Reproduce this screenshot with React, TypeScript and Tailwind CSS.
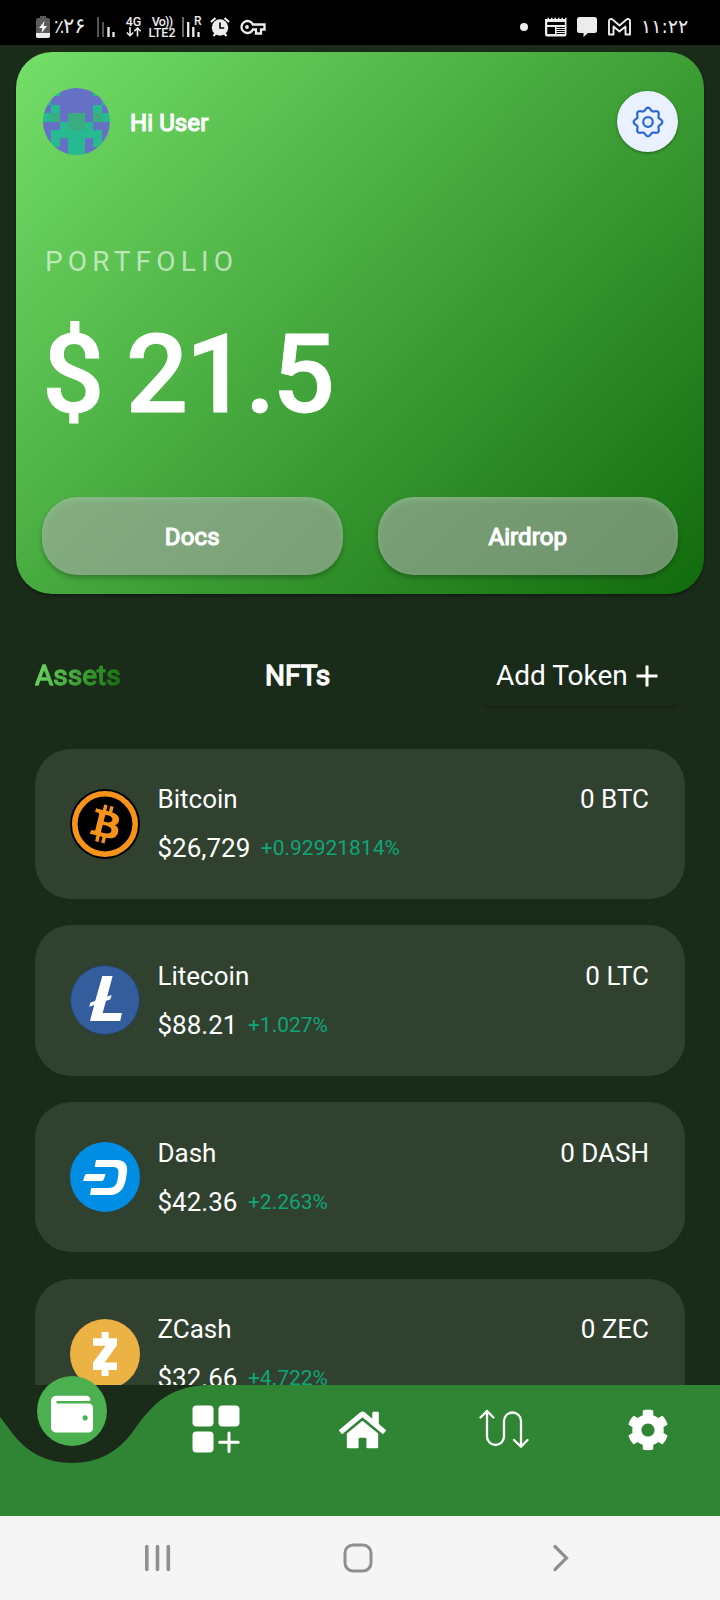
import { useState } from 'react'
import type { ReactNode } from 'react'
import clsx from 'clsx'
import { FaCog, FaHome, FaWallet } from 'react-icons/fa'

interface Asset {
  name: string
  symbol: string
  price: string
  change: string
  icon: ReactNode
}

// P = purple, T = teal, G = green
const avatarRows = [
  'PTPPPPTP',
  'TPPPPPPT',
  'PTPPPPTP',
  'TGPGGPGT',
  'PPTGGTPP',
  'PTTTTTTP',
  'PTPTTPTP',
  'PPPTTPPP',
]

const avatarColors: Record<string, string> = { P: '#6670c4', T: '#27b98f', G: '#3bac80' }

// Eight soft lobes around the centre of a 40x40 box
const gearPoints = Array.from({ length: 128 }, (_, i) => {
  const a = (i / 128) * Math.PI * 2
  const r = 12.9 + 1.4 * Math.cos(8 * a)
  return `${(20 + r * Math.cos(a)).toFixed(2)},${(20 + r * Math.sin(a)).toFixed(2)}`
}).join(' ')

function Avatar() {
  return (
    <svg viewBox="0 0 8 8" className="w-[67px] h-[67px] rounded-full" shapeRendering="crispEdges">
      {avatarRows.map((row, y) =>
        row.split('').map((c, x) => (
          <rect key={`${x}-${y}`} x={x} y={y} width="1" height="1" fill={avatarColors[c]} />
        ))
      )}
    </svg>
  )
}

function BitcoinIcon() {
  return (
    <svg viewBox="0 0 70 70" className="w-[70px] h-[70px]">
      <circle cx="35" cy="35" r="35" fill="#000" />
      <circle cx="35" cy="35" r="30.2" fill="none" stroke="#f7931a" strokeWidth="5.6" />
      <path
        transform="translate(3.8 3.8) scale(1.95)"
        fill="#f7931a"
        d="M23.189 14.02c.314-2.096-1.283-3.223-3.465-3.975l.708-2.84-1.728-.43-.69 2.765c-.454-.114-.92-.22-1.385-.326l.695-2.783L15.596 6l-.708 2.839c-.376-.086-.746-.17-1.104-.26l.002-.009-2.384-.595-.46 1.846s1.283.294 1.256.312c.7.175.826.638.805 1.006l-.806 3.235c.048.012.11.03.18.057l-.183-.045-1.13 4.532c-.086.212-.303.531-.793.41.018.025-1.256-.313-1.256-.313l-.858 1.978 2.25.561c.418.105.828.215 1.231.318l-.715 2.872 1.727.43.708-2.84c.472.127.93.245 1.378.357l-.706 2.828 1.728.43.715-2.866c2.948.558 5.164.333 6.097-2.333.752-2.146-.037-3.385-1.588-4.192 1.13-.26 1.98-1.003 2.207-2.538zm-3.95 5.538c-.533 2.147-4.148.986-5.32.695l.95-3.805c1.172.293 4.929.872 4.37 3.11zm.535-5.569c-.487 1.953-3.495.96-4.47.717l.86-3.45c.975.243 4.118.696 3.61 2.733z"
      />
    </svg>
  )
}

function LitecoinIcon() {
  return (
    <svg viewBox="0 0 70 70" className="w-[70px] h-[70px]">
      <circle cx="35" cy="35" r="34.5" fill="#345d9d" stroke="#23406b" strokeWidth="0.8" />
      <path
        fill="#fff"
        d="M32.3 11h10.3l-5.4 20.6 4.4-1.5-1.1 4.2-4.5 1.6-3.4 12H52l-1.8 8H20l4.2-16-5 1.8 1-4 5.1-1.9z"
      />
    </svg>
  )
}

function DashIcon() {
  return (
    <svg viewBox="0 0 70 70" className="w-[70px] h-[70px]">
      <circle cx="35" cy="35" r="35" fill="#008de4" />
      <path
        fill="#fff"
        d="M26 18h21c8 0 11 5 10 12l-1.3 8C54 47.5 48.5 53 40 53H20l1.2-7H38.3c5.7 0 8.7-3 9.5-9.5l.6-4.5c.6-5-1.4-7-5.400-7H24.7z"
      />
      <path fill="#fff" d="M17.6 32H35.5l-1.5 5c-.6 1.5-1.3 2-3 2H13l1.6-5c.5-1.5 1.3-2 3-2z" />
    </svg>
  )
}

function ZcashIcon() {
  return (
    <svg viewBox="0 0 70 70" className="w-[70px] h-[70px]">
      <circle cx="35" cy="35" r="35" fill="#ecb244" />
      <path
        fill="#fff"
        d="M31.6 13h7v6.3H47v6.9L34.5 43.5H47V51h-8.4v6h-7v-6H23v-7.4L35.6 26.7H23v-7.4h8.6z"
      />
    </svg>
  )
}

const assets: Asset[] = [
  { name: 'Bitcoin', symbol: 'BTC', price: '$26,729', change: '+0.92921814%', icon: <BitcoinIcon /> },
  { name: 'Litecoin', symbol: 'LTC', price: '$88.21', change: '+1.027%', icon: <LitecoinIcon /> },
  { name: 'Dash', symbol: 'DASH', price: '$42.36', change: '+2.263%', icon: <DashIcon /> },
  { name: 'ZCash', symbol: 'ZEC', price: '$32.66', change: '+4.722%', icon: <ZcashIcon /> },
]

function StatusBar() {
  return (
    <div className="h-[45px] shrink-0 bg-black text-[#ececec] flex items-center justify-between pl-9 pr-[37px] pt-2">
      <div className="flex items-center">
        {/* Battery */}
        <svg viewBox="0 0 14 22" className="w-[14px] h-[22px]">
          <path fill="#5c5c5c" d="M4 0h6v2h2a2 2 0 0 1 2 2v16a2 2 0 0 1-2 2H2a2 2 0 0 1-2-2V4a2 2 0 0 1 2-2h2z" />
          <path fill="#ececec" d="M0 17h14v3a2 2 0 0 1-2 2H2a2 2 0 0 1-2-2z" />
          <path fill="#fff" d="M8.5 5 3 12h3.5l-1 5 5.5-7H7.5z" />
        </svg>
        <div dir="ltr" className="ml-[4px] -mt-[2px] w-[33px] flex items-center text-[21px] leading-5 font-['DejaVu_Sans',sans-serif]">
          <span className="w-[9px] text-[19px]">٪</span>
          <span className="tracking-[-1px]">۲۶</span>
        </div>
        {/* SIM 1 signal */}
        <svg viewBox="0 0 19 21" className="ml-[9px] w-[19px] h-[21px]">
          <path stroke="#555" strokeWidth="2" d="M2 1v20M7 6v15" />
          <path stroke="#ececec" strokeWidth="2.3" d="M12.5 11v10M17.5 16v5" />
        </svg>
        <div className="ml-[10px] w-[17px] flex flex-col items-center">
          <span className="text-[12.5px] leading-[11px] font-medium">4G</span>
          <svg viewBox="0 0 16 10" className="w-4 h-[10px]" fill="none" stroke="#ececec" strokeWidth="1.6">
            <path d="M4 0v8.5M.8 5.5 4 8.7l3.2-3.2M11.500 9.5V1M8.3 4.2l3.2-3.2 3.2 3.2" />
          </svg>
        </div>
        <div className="ml-[6px] w-[28px] flex flex-col items-center text-[12.5px] leading-[11px] font-medium">
          <span className="tracking-[-0.8px]">Vo))</span>
          <span>LTE2</span>
        </div>
        {/* SIM 2 signal, roaming */}
        <div className="relative ml-[5px] w-[20px] h-[21px]">
          <svg viewBox="0 0 20 21" className="w-[20px] h-[21px]">
            <path stroke="#666" strokeWidth="2" d="M2 1v20" />
            <path stroke="#ececec" strokeWidth="2.3" d="M7.2 6v15M12.3 11v10M17.5 16v5" />
          </svg>
          <span className="absolute left-[13px] -top-[1px] text-[12px] leading-[12px] font-medium bg-black">R</span>
        </div>
        {/* Alarm */}
        <svg viewBox="0 0 20 20" className="ml-[9px] w-[20px] h-[20px]">
          <g stroke="#ececec" strokeWidth="2.2" fill="none">
            <path d="M1 5 5.5 1M19 5l-4.5-4M3.5 19l2-2.5M16.5 19l-2-2.5" />
          </g>
          <circle cx="10" cy="10.5" r="8.2" fill="#ececec" />
          <path d="M10 5.5v5.5h4.2" stroke="#000" strokeWidth="1.6" fill="none" />
        </svg>
        {/* VPN key */}
        <svg viewBox="0 0 26 16" className="ml-[10px] w-[26px] h-[16px]" fill="none" stroke="#ececec" strokeWidth="2.3">
          <path d="M12.9 5.5A6 6 0 1 0 12.9 10.5H16v4h5v-4h3.5v-5z" />
          <circle cx="7" cy="8" r="1.9" fill="#ececec" stroke="none" />
        </svg>
      </div>

      <div className="flex items-center">
        <span className="w-2 h-2 rounded-full bg-[#ececec]" />
        {/* News */}
        <svg viewBox="0 0 22 20" className="ml-[17px] w-[22px] h-[20px]">
          <path fill="#ececec" d="M1 2h1.5V.8H4V2h2V.8h1.5V2h2V.8H11V2h2V.8h1.5V2h2V.8H18V2h2V.8h1.5V17.5a2 2 0 0 1-2 2H2a2 2 0 0 1-2-2V2z" />
          <path fill="#000" d="M2.3 5h17.5v3H2.3zM2.3 10h7.7v7H2.3zM11.5 10h8.3v1.1h-8.3zM11.5 12h8.3v1.1h-8.3zM11.5 14h8.3v1.1h-8.3zM11.5 16h8.3v1.1h-8.3z" />
        </svg>
        <svg viewBox="0 0 20 20" className="ml-[10px] w-[20px] h-[20px]">
          <path fill="#ececec" d="M2.5 0h15A2.5 2.5 0 0 1 20 2.5v11a2.5 2.5 0 0 1-2.5 2.5H11l-4.5 4v-4h-4A2.5 2.5 0 0 1 0 13.5v-11A2.5 2.5 0 0 1 2.5 0z" />
        </svg>
        {/* Gmail */}
        <svg viewBox="0 0 23 18" className="ml-[11px] w-[23px] h-[18px]" fill="none" stroke="#ececec" strokeWidth="1.9" strokeLinejoin="round">
          <path d="M1 3V16.5H5.5V8.5l6 5 6-5v8H22V3c0-2-2.2-2.5-3.5-1.5l-7 6-7-6C3.2.5 1 1 1 3z" />
        </svg>
        <div dir="ltr" className="ml-[10px] -mt-[2px] w-[42px] whitespace-nowrap text-[19px] leading-5 tracking-[-2px] font-['DejaVu_Sans',sans-serif]">
          <bdi>۱۱</bdi>:<bdi>۲۲</bdi>
        </div>
      </div>
    </div>
  )
}

function PortfolioCard() {
  return (
    <div className="mt-[7px] mx-4 h-[542px] shrink-0 rounded-[36px] px-[26px] pt-9 bg-[linear-gradient(135deg,#74df69_0%,#116a0c_100%)] shadow-[0_2px_3px_rgba(0,0,0,0.35)]">
      <div className="flex items-center h-[67px]">
        <div className="ml-px">
          <Avatar />
        </div>
        <span className="ml-5 mt-[2px] text-[24px] leading-7 tracking-[0.1px] [-webkit-text-stroke:1.2px]">Hi User</span>
        <button className="ml-auto w-[61px] h-[61px] rounded-full bg-[#e9f1fe] flex items-center justify-center shadow-[0_1px_3px_rgba(0,0,0,0.4)]">
          <svg viewBox="0 0 40 40" className="w-10 h-10" fill="none" stroke="#2b66d9" strokeWidth="2.2">
            <polygon points={gearPoints} strokeLinejoin="round" />
            <circle cx="20" cy="20" r="4.8" />
          </svg>
        </button>
      </div>

      <p className="mt-[91px] ml-[3px] text-[28px] leading-8 tracking-[5.2px] text-white/60">PORTFOLIO</p>
      <p className="mt-[41px] text-[110px] leading-[112px] font-medium tracking-[-3px] [-webkit-text-stroke:0.8px]">$ 21.5</p>

      <div className="mt-[66px] flex gap-[35px]">
        {['Docs', 'Airdrop'].map((label) => (
          <button
            key={label}
            className="flex-1 h-[78px] rounded-[36px] bg-[#aaaaaa]/60 pt-px text-[24px] tracking-[0.1px] [-webkit-text-stroke:1.2px] shadow-[0_3px_5px_rgba(0,0,0,0.25),inset_0_3px_6px_rgba(150,220,150,0.35)]"
          >
            {label}
          </button>
        ))}
      </div>
    </div>
  )
}

function AssetRow({ asset }: { asset: Asset }) {
  return (
    <div className="h-[150.5px] shrink-0 rounded-[36px] bg-[#314130] flex items-center pl-[35px] pr-9 text-[26px] leading-[30px]">
      {asset.icon}
      <div className="ml-[17.5px] flex-1 flex flex-col gap-[19px]">
        <div className="flex justify-between">
          <span>{asset.name}</span>
          <span>0 {asset.symbol}</span>
        </div>
        <div className="flex items-center gap-[10.5px]">
          <span>{asset.price}</span>
          <span className="text-[21px] text-[#0ea579]">{asset.change}</span>
        </div>
      </div>
    </div>
  )
}

function BottomNav() {
  return (
    <div className="relative h-[131px] shrink-0">
      {/* Bar with the notch under the active tab */}
      <svg viewBox="0 0 720 131" className="absolute inset-0 w-full h-full">
        <path
          fill="#308534"
          d="M-66 0C-21 0-4 26 11 46.5 26 67 46 78 72 78S118 67 133 46.5C148 26 165 0 210 0H720V131H-66z"
        />
      </svg>
      <button className="absolute left-[37px] -top-[9px] w-[70px] h-[70px] rounded-full bg-[#4caf50] flex items-center justify-center">
        <FaWallet className="w-[42px] h-[42px] mt-[5px]" />
      </button>
      <div className="relative ml-36 h-[90px] flex items-center">
        <button className="flex-1 flex justify-center">
          <svg viewBox="0 0 48 48" className="w-12 h-12 mb-[2px]" fill="#fff">
            <rect x="0.5" y="0.5" width="21" height="21" rx="4" />
            <rect x="26.5" y="0.5" width="21" height="21" rx="4" />
            <rect x="0.5" y="26.5" width="21" height="21" rx="4" />
            <path d="M37 28v18.5M27.7 37.2h18.5" stroke="#fff" strokeWidth="3" strokeLinecap="round" />
          </svg>
        </button>
        <button className="flex-1 flex justify-center">
          <FaHome className="ml-1 w-[47px] h-[42px]" />
        </button>
        <button className="flex-1 flex justify-center">
          <svg viewBox="0 0 50 40" className="w-[50px] h-10 mb-[3px]" fill="none" stroke="#fff" strokeWidth="2.3" strokeLinecap="round" strokeLinejoin="round">
            <path d="M8 2v25.5a8.5 8.5 0 0 0 17 0V12a8.5 8.5 0 0 1 17 0v25.5M1.5 8.5 8 2l6.5 6.5M35 31l7 6.8 6.5-6.8" />
          </svg>
        </button>
        <button className="flex-1 flex justify-center">
          <FaCog className="w-[42px] h-[42px]" />
        </button>
      </div>
    </div>
  )
}

function SystemNav() {
  return (
    <div className="h-[84px] shrink-0 bg-[#f5f5f5] text-[#8f8f8f] flex items-center justify-between pl-[144px] pr-[150px]">
      <svg viewBox="0 0 28 28" className="w-7 h-7" stroke="currentColor" strokeWidth="3.6" strokeLinecap="round">
        <path d="M2.8 2.5v23M13.5 2.5v23M24.3 2.5v23" />
      </svg>
      <svg viewBox="0 0 30 30" className="mr-2 w-[30px] h-[30px]" fill="none" stroke="currentColor" strokeWidth="3">
        <rect x="2" y="2" width="26" height="26" rx="8" />
      </svg>
      <svg viewBox="0 0 18 28" className="w-[18px] h-7" fill="none" stroke="currentColor" strokeWidth="3.2" strokeLinecap="round">
        <path d="M3 2.5 14.5 14 3 25.5" />
      </svg>
    </div>
  )
}

export default function App() {
  const [tab, setTab] = useState<'assets' | 'nfts'>('assets')
  const activeTab = 'bg-[linear-gradient(110deg,#6fdb64_0%,#126b0d_100%)] bg-clip-text text-transparent'

  return (
    <div className="w-[720px] h-[1600px] flex flex-col overflow-hidden bg-[#1a2b1a] text-white font-[Roboto,sans-serif]">
      <StatusBar />
      <PortfolioCard />

      <div className="mt-[52px] pl-[35px] pr-[42px] h-[60px] shrink-0 flex items-center text-[28px] leading-8">
        <div className="w-[230px]">
          <button
            onClick={() => setTab('assets')}
            className={clsx('[-webkit-text-stroke:1.3px]', tab === 'assets' && activeTab)}
          >
            Assets
          </button>
        </div>
        <button
          onClick={() => setTab('nfts')}
          className={clsx('[-webkit-text-stroke:1.3px]', tab === 'nfts' && activeTab)}
        >
          NFTs
        </button>
        <button className="ml-auto w-[195px] h-[60px] pl-[13px] rounded-lg flex items-center shadow-[0_2px_2px_rgba(0,0,0,0.15)]">
          Add Token
          <svg viewBox="0 0 22 22" className="ml-[8px] w-[22px] h-[22px]" stroke="#fff" strokeWidth="3">
            <path d="M11 .5v21M.5 11h21" />
          </svg>
        </button>
      </div>

      <div className="mt-[42.5px] px-[35px] flex-1 min-h-0 overflow-hidden flex flex-col gap-[26.2px]">
        {assets.map((asset) => (
          <AssetRow key={asset.symbol} asset={asset} />
        ))}
      </div>

      <BottomNav />
      <SystemNav />
    </div>
  )
}
